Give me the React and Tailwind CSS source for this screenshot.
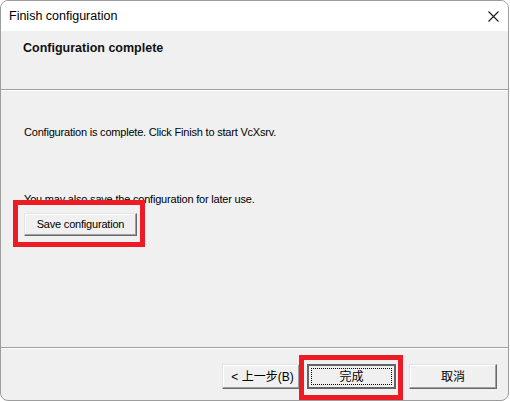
import React from 'react';

const font = { fontFamily: '"Liberation Sans", "Noto Sans CJK TC", Arial, sans-serif' };

function ClassicButton({ children, className = '', isDefault = false, h = 'h-[25px]' }) {
  if (isDefault) {
    return (
      <div className={`${h} border-2 border-[#646464] bg-[#f0f0f0] p-[2px] ${className}`}>
        <div className="h-full border border-dotted border-black flex items-center justify-center text-[12px] text-black">
          {children}
        </div>
      </div>
    );
  }
  return (
    <div
      className={`${h} border border-t-[#e3e3e3] border-l-[#e3e3e3] border-b-[#696969] border-r-[#696969] bg-[#f0f0f0] shadow-[inset_-1px_-1px_0_#a0a0a0,inset_1px_1px_0_#ffffff] flex items-center justify-center text-black ${className}`}
    >
      {children}
    </div>
  );
}

export default function App() {
  return (
    <div className="w-[510px] h-[402px] bg-white" style={font}>
      <div className="relative w-[509px] h-[401px] border border-[#9c9c9c] rounded-[8px] overflow-hidden flex flex-col bg-[#f0f0f0]">
        {/* title bar */}
        <div className="h-[30px] bg-white flex items-center justify-between pl-[8px] pr-[9px]">
          <span className="text-[12.5px] text-black">Finish configuration</span>
          <svg width="11" height="11" viewBox="0 0 11 11" className="mt-[1px]">
            <path d="M0.5 0.5 L10.5 10.5 M10.5 0.5 L0.5 10.5" stroke="#1a1a1a" strokeWidth="1.1" fill="none" />
          </svg>
        </div>

        {/* header */}
        <div className="h-[58px] pl-[22px] pt-[9px]">
          <div className="text-[12.5px] font-bold text-[#111] leading-[17px]">Configuration complete</div>
        </div>
        <div className="h-[2px] border-t border-[#a0a0a0] border-b border-b-white" />

        {/* body */}
        <div className="h-[256px] pl-[23px] pt-[34px] text-[11px] tracking-[-0.2px] text-black">
          <div className="leading-[15px]">Configuration is complete. Click Finish to start VcXsrv.</div>
          <div className="leading-[15px] mt-[52px]">You may also save the configuration for later use.</div>
          <ClassicButton h="h-[23px]" className="w-[113px] mt-[6px] text-[11px]">Save configuration</ClassicButton>
        </div>
        <div className="h-[2px] border-t border-[#a0a0a0] border-b border-b-white" />

        {/* footer */}
        <div className="flex-1 flex pt-[15px] pl-[221px]">
          <ClassicButton className="w-[78px] pl-[3px] text-[12px]">&lt;&nbsp;上一步(B)</ClassicButton>
          <ClassicButton isDefault className="w-[89px] ml-[7px]">完成</ClassicButton>
          <ClassicButton className="w-[88px] ml-[13px] text-[12px]">取消</ClassicButton>
        </div>

        {/* red annotation boxes */}
        <div className="absolute left-[12px] top-[199px] w-[132px] h-[47px] border-[5px] border-[#ed1c24]" />
        <div className="absolute left-[298px] top-[354px] w-[104px] h-[45px] border-[5px] border-[#ed1c24]" />
      </div>
    </div>
  );
}
